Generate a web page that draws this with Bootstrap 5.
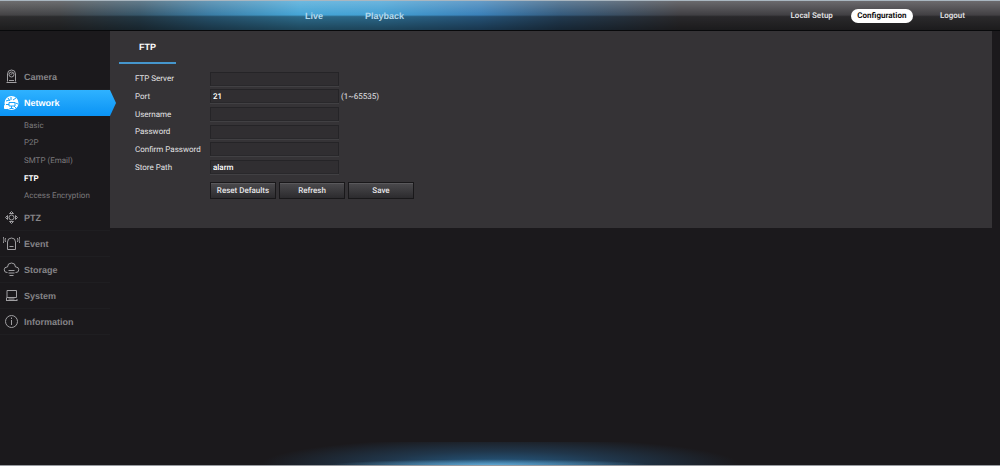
<!DOCTYPE html>
<html lang="en">
<head>
<meta charset="utf-8">
<meta name="viewport" content="width=device-width, initial-scale=1">
<title>FTP - Network Configuration</title>
<link href="https://cdn.jsdelivr.net/npm/bootstrap@5.3.0/dist/css/bootstrap.min.css" rel="stylesheet">
<style>
body{background:#1b191c;font-family:"Liberation Sans",Arial,sans-serif;font-size:9px;line-height:12px;color:#d6d6d8;text-rendering:geometricPrecision}
a{text-decoration:none}
.topbar{height:31px;border-top:1px solid #a9b6c0;border-bottom:1px solid #08090b;
background:linear-gradient(rgba(255,255,255,.22),rgba(255,255,255,0) 48%,rgba(0,0,0,.36) 54%,rgba(0,0,0,.58)),
linear-gradient(90deg,#454446 0,#434548 6%,#36566a 14%,#3a7ca4 21%,#45a5d6 30%,#43a0d4 38%,#3a80b8 48%,#345a7c 56%,#403f43 68%,#434144 100%)}
.main-nav{margin-left:305px;gap:42px}
.main-nav a{font-weight:700;font-size:9px;color:#b4d9ed}
.main-nav .nav-link,.user-nav .nav-link{padding:0}
.user-nav{padding-right:35px;gap:18px}
.user-nav .nav-link{font:700 8px/14px Roboto,sans-serif;color:#d8d8da}
.user-nav .nav-link.active{background:#fff;color:#111;border-radius:7px;width:62px;text-align:center}
.user-nav .logout{margin-left:9px}
.side{width:110px;padding-top:33px}
.side-link{height:26px;padding-left:3px;gap:4px;font-weight:700;color:#858487;border-bottom:1px solid #1f1e21}
.side-link svg{width:17px;height:17px;flex:none;fill:none;stroke:#a09fa2;stroke-width:1}
.side-link.active{color:#fff;width:116px;border:0;background:linear-gradient(#2fb2ff,#0a93f5);clip-path:polygon(0 0,110px 0,100% 50%,110px 100%,0 100%)}
.side-link.active svg{stroke:#fff}
.sub{height:89px;padding:1px 0 0 24px;font:8px/12px Roboto,sans-serif}
.sub a{color:#7b7a7d}
.sub a.active{color:#fff;font-weight:700}
.panel{background:#353336;margin-right:8px;height:197px;padding:0 9px}
.tab-item{width:57px;height:33px;border-bottom:2px solid #4596cd;color:#fff;font-weight:700}
.ftp-form{margin:6px 16px 0}
.fields{height:106px;font:8px/12px Roboto,sans-serif}
.fields label{width:75px;color:#e2e2e4}
.fields label,.fields span{padding-top:1px}
.fields span{margin-left:2px;color:#e2e2e4}
.fields input{width:129px;height:14px;padding:0 2px;border:1px solid #252427;border-bottom-color:#29282b;border-radius:0;background:#302e31;color:#fff;font:500 8px/12px Roboto,sans-serif;text-rendering:inherit;box-shadow:0 1px #414043}
.actions{margin:6px 0 0 75px;gap:3px}
.actions .btn{width:66px;height:17px;padding:0;font:500 8px/14px Roboto,sans-serif;text-rendering:inherit;color:#e6e6e8;border:1px solid #19181a;border-radius:0;background:linear-gradient(#4b4a4d,#2c2b2e);box-shadow:inset 0 1px #5a595c}
.glow{height:24px;border-bottom:1px solid #989ba0;background:radial-gradient(ellipse 16% 25% at 49% 100%,#5fa5d0,transparent),radial-gradient(ellipse 24% 120% at 50% 100%,#265e88,rgba(35,70,100,.65) 50%,transparent)}
</style>
</head>
<body class="d-flex flex-column min-vh-100">
<header class="topbar d-flex align-items-center flex-shrink-0">
<nav class="main-nav d-flex" aria-label="Main"><a class="nav-link" href="#">Live</a><a class="nav-link" href="#">Playback</a></nav>
<nav class="user-nav d-flex ms-auto" aria-label="Account"><a class="nav-link" href="#">Local Setup</a><a class="nav-link active" href="#">Configuration</a><a class="nav-link logout" href="#">Logout</a></nav>
</header>
<div class="d-flex flex-grow-1">
<nav class="side flex-shrink-0" aria-label="Settings">
<a class="side-link d-flex align-items-center" href="#"><svg viewBox="0 0 17 17"><path d="M4.500 13.500V6a4 4 0 0 1 8 0v7.500M3.500 14.500h10M6 12.500h5"/><circle cx="8.500" cy="6.500" r="2.500"/><path d="M7.500 6.500l2-1"/></svg>Camera</a>
<a class="side-link active d-flex align-items-center" href="#"><svg viewBox="0 0 17 17"><circle cx="8.500" cy="8" r="7" fill="#fff" stroke="none"/><g stroke="#1ba3fb"><path d="M3 6l3.500-1M8 2v3M10 5l3-2M12.500 8l2.500 1M3 9.500h3M11 11l2 2M5 3l2 3"/><path fill="#fff" d="M6 7.500h6v3.500H6z"/><path d="M6.500 13.500h4M8.500 11v2.500"/></g><path d="M1.500 10.500h3v3h-3z" fill="#fff"/></svg>Network</a>
<div class="sub d-flex flex-column justify-content-around"><a href="#">Basic</a><a href="#">P2P</a><a href="#">SMTP (Email)</a><a class="active" href="#">FTP</a><a href="#">Access Encryption</a></div>
<a class="side-link d-flex align-items-center" href="#"><svg viewBox="0 0 17 17"><circle cx="8.500" cy="8.500" r="2.500"/><path d="M6.500 4.500l2-2 2 2zM6.500 12.500l2 2 2-2zM4.500 6.500l-2 2 2 2zM12.500 6.500l2 2-2 2z"/></svg>PTZ</a>
<a class="side-link d-flex align-items-center" href="#"><svg viewBox="0 0 17 17"><path d="M4.500 14.500V7a4 4 0 0 1 8 0v7.500zM6.500 11.500h4M2.500 3q-1 2 0 4M.5 2q-1 3 0 6M14.500 3q1 2 0 4M16.500 2q1 3 0 6"/></svg>Event</a>
<a class="side-link d-flex align-items-center" href="#"><svg viewBox="0 0 17 17"><path d="M4.500 11.500H4a2.500 2.500 0 0 1 0-5.500h.5a4 4 0 0 1 8 0h.5a2.500 2.500 0 0 1 0 5.500h-.5M5.500 9.500h6M5.500 12h6M6.500 14.500h4"/></svg>Storage</a>
<a class="side-link d-flex align-items-center" href="#"><svg viewBox="0 0 17 17"><path d="M4 3.500h9.500v7H4zM3 13.500h11M3.500 10.500v3M5.500 12h6M14 12v2"/></svg>System</a>
<a class="side-link d-flex align-items-center" href="#"><svg viewBox="0 0 17 17"><circle cx="8.500" cy="8.500" r="6"/><path d="M8.500 7v5M8.500 4.500v1.500"/></svg>Information</a>
</nav>
<main class="panel flex-grow-1">
<a class="tab-item d-flex align-items-center justify-content-center" href="#">FTP</a>
<form class="ftp-form">
<div class="fields d-flex flex-column justify-content-around">
<div class="d-flex align-items-center"><label for="server">FTP Server</label><input id="server" type="text"></div>
<div class="d-flex align-items-center"><label for="port">Port</label><input id="port" type="text" value="21"><span>(1~65535)</span></div>
<div class="d-flex align-items-center"><label for="user">Username</label><input id="user" type="text"></div>
<div class="d-flex align-items-center"><label for="pass">Password</label><input id="pass" type="password"></div>
<div class="d-flex align-items-center"><label for="confirm">Confirm Password</label><input id="confirm" type="password"></div>
<div class="d-flex align-items-center"><label for="path">Store Path</label><input id="path" type="text" value="alarm"></div>
</div>
<div class="actions d-flex"><button class="btn" type="button">Reset Defaults</button><button class="btn" type="button">Refresh</button><button class="btn" type="button">Save</button></div>
</form>
</main>
</div>
<footer class="glow flex-shrink-0"></footer>
<script src="https://cdn.jsdelivr.net/npm/bootstrap@5.3.0/dist/js/bootstrap.bundle.min.js"></script>
</body>
</html>
